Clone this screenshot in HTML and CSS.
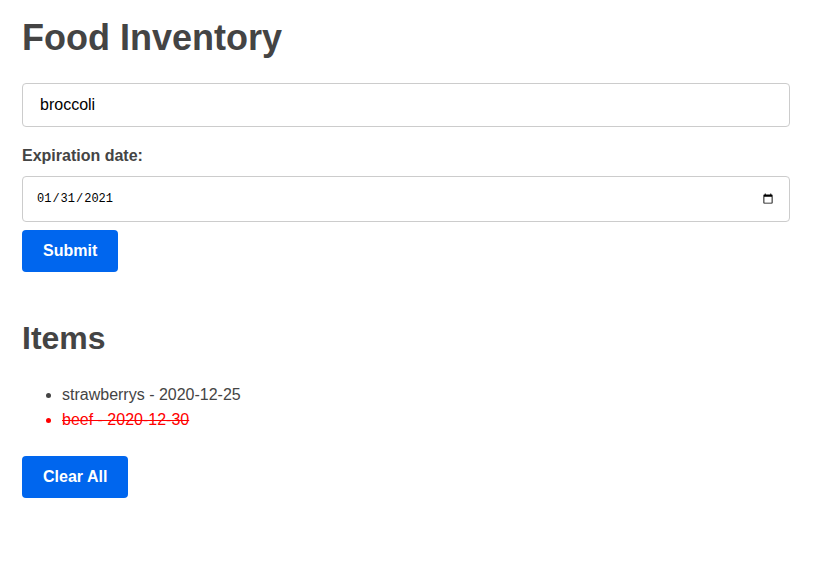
FILE: index.html
```html
<!DOCTYPE html>
<html>
<head>
<meta charset="utf-8">
<link rel="stylesheet" href="styles.css">
</head>
<body>
<main class="app">
  <h1 class="title">Food Inventory</h1>
  <form class="form">
    <input class="text-input" type="text" value="broccoli">
    <label class="label">Expiration date:</label>
    <input class="date-input" type="date" value="2021-01-31">
    <button class="btn" type="button">Submit</button>
  </form>
  <h2 class="subtitle">Items</h2>
  <ul class="list">
    <li class="item">strawberrys - 2020-12-25</li>
    <li class="item expired">beef - 2020-12-30</li>
  </ul>
  <button class="btn" type="button">Clear All</button>
</main>
</body>
</html>
```
FILE: styles.css
```css
html, body {
  margin: 0;
  padding: 0;
  background: #fff;
}
body {
  font-family: "Liberation Sans", Arial, sans-serif;
  color: #444;
}
.app {
  width: 768px;
  padding: 17px 0 0 22px;
}
.title {
  margin: 0;
  font-size: 36px;
  font-weight: bold;
  line-height: 41px;
}
.form {
  display: flex;
  flex-direction: column;
  align-items: flex-start;
  margin-top: 25px;
}
.text-input {
  box-sizing: border-box;
  width: 768px;
  height: 44px;
  border: 1px solid #ccc;
  border-radius: 4px;
  padding: 0 17px;
  font-family: "Liberation Sans", Arial, sans-serif;
  font-size: 16px;
  color: #000;
  outline: none;
}
.label {
  margin-top: 20px;
  font-size: 16px;
  font-weight: bold;
  line-height: 18px;
}
.date-input {
  box-sizing: border-box;
  width: 768px;
  height: 46px;
  margin-top: 11px;
  border: 1px solid #ccc;
  border-radius: 4px;
  padding: 0 13px;
  font-family: "Liberation Mono", "Courier New", monospace;
  font-size: 12px;
  color: #000;
  background: #fff;
}
.btn {
  height: 42px;
  margin-top: 8px;
  padding: 0 21px;
  border: none;
  border-radius: 4px;
  background: #0066ee;
  color: #fff;
  font-family: "Liberation Sans", Arial, sans-serif;
  font-size: 16px;
  font-weight: bold;
}
.subtitle {
  margin: 48px 0 0;
  font-size: 32px;
  font-weight: bold;
  line-height: 37px;
}
.list {
  margin: 25px 0 0;
  padding-left: 40px;
  font-size: 16px;
  line-height: 25px;
}
.expired {
  color: red;
  text-decoration: line-through;
}
.list + .btn {
  margin-top: 24px;
}
```
